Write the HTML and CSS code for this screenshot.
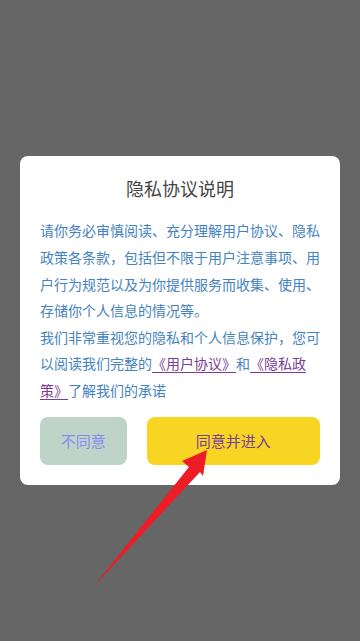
FILE: index.html
```html
<!DOCTYPE html>
<html lang="zh-CN">
<head>
<meta charset="utf-8">
<meta name="viewport" content="width=device-width, initial-scale=1">
<title>隐私协议说明</title>
<link rel="stylesheet" href="styles.css">
</head>
<body>
<div class="screen">
  <div class="dialog">
    <h1 class="dialog-title">隐私协议说明</h1>
    <div class="dialog-body">
      <p class="para">请你务必审慎阅读、充分理解用户协议、隐私政策各条款，包括但不限于用户注意事项、用户行为规范以及为你提供服务而收集、使用、存储你个人信息的情况等。</p>
      <p class="para">我们非常重视您的隐私和个人信息保护，您可以阅读我们完整的<a class="link" href="#">《用户协议》</a>和<a class="link" href="#">《隐私政策》</a>了解我们的承诺</p>
    </div>
    <div class="actions">
      <button class="btn btn-decline" type="button">不同意</button>
      <button class="btn btn-accept" type="button">同意并进入</button>
    </div>
  </div>
  <svg class="arrow" width="360" height="641" viewBox="0 0 360 641" aria-hidden="true">
    <polygon points="207,450 182,461 189,467 94,586 200,472 203,476" fill="#ee1c25"/>
  </svg>
</div>
</body>
</html>
```

FILE: styles.css
```css
* {
  box-sizing: border-box;
}

html, body {
  margin: 0;
  padding: 0;
}

body {
  background: #666666;
  font-family: "Noto Sans CJK SC", "Noto Sans", "Liberation Sans", sans-serif;
}

.screen {
  position: relative;
  width: 360px;
  height: 641px;
  display: flex;
  align-items: center;
  justify-content: center;
  overflow: hidden;
}

.dialog {
  width: 320px;
  background: #ffffff;
  border-radius: 8px;
  padding: 20px 20px 20px 20px;
}

.dialog-title {
  margin: 0 0 16px 0;
  font-size: 18px;
  line-height: 25px;
  font-weight: normal;
  color: #444444;
  text-align: center;
}

.dialog-body {
  color: #4583c2;
  font-size: 14px;
  line-height: 26.6px;
}

.para {
  margin: 0;
}

.link {
  color: #7b3d95;
  text-decoration: underline;
  text-underline-offset: 3px;
}

.actions {
  display: flex;
  gap: 20px;
  margin-top: 13px;
}

.btn {
  height: 48px;
  border: none;
  border-radius: 8px;
  font-family: inherit;
  font-size: 15px;
  padding: 0;
}

.btn-decline {
  flex: 1;
  background: #bed4c8;
  color: #8c8cee;
}

.btn-accept {
  flex: 2;
  background: #f8d423;
  color: #7a3e9c;
}

.arrow {
  position: absolute;
  left: 0;
  top: 0;
  pointer-events: none;
}
```
